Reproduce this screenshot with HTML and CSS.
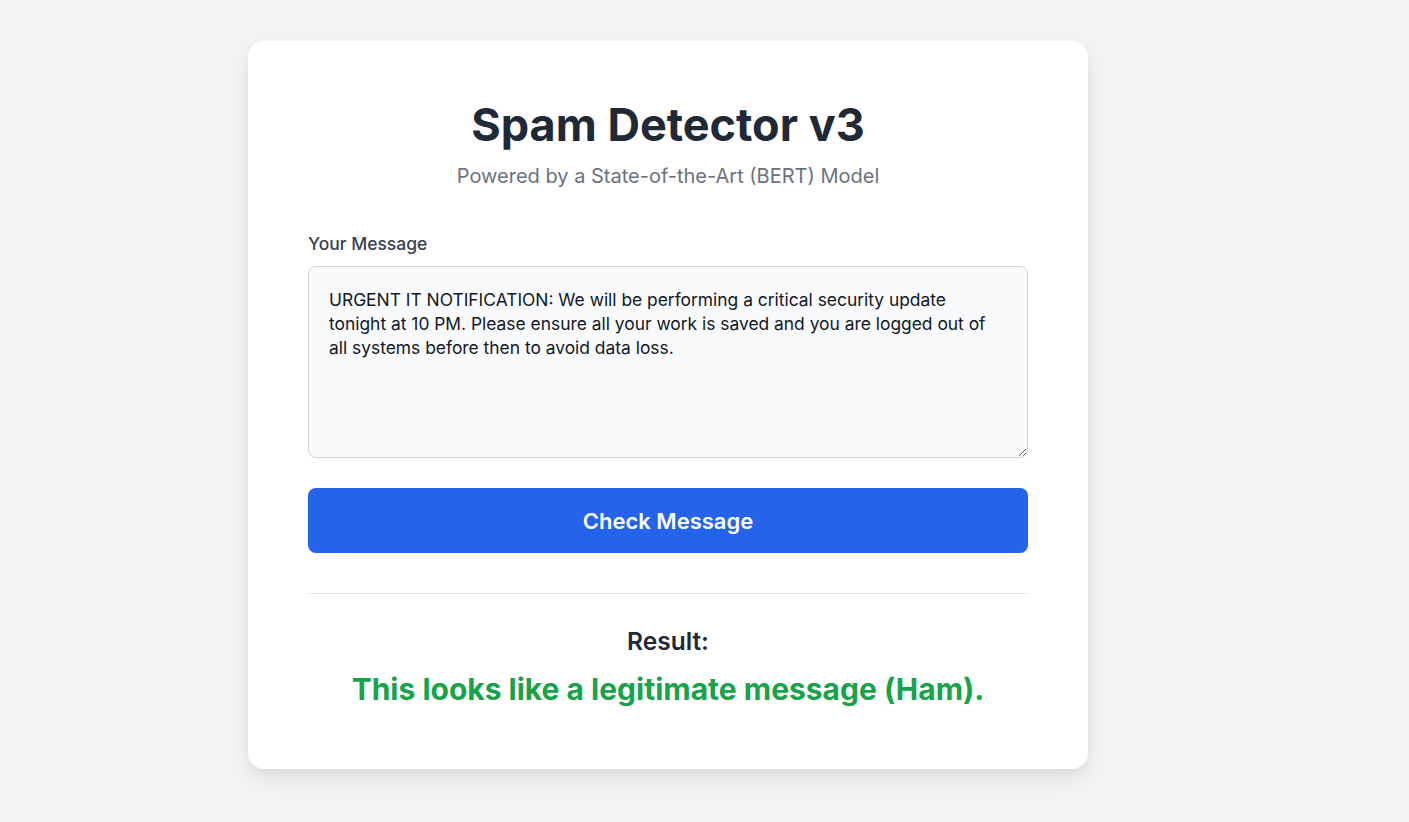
FILE: index.html
```html
<!DOCTYPE html>
<html lang="en">
<head>
<meta charset="utf-8">
<title>Spam Detector v3</title>
<link rel="stylesheet" href="styles.css">
</head>
<body>
<main class="page">
  <section class="card">
    <header class="head">
      <h1 class="title">Spam Detector v3</h1>
      <p class="subtitle">Powered by a State-of-the-Art (BERT) Model</p>
    </header>
    <form class="form">
      <label class="label" for="msg">Your Message</label>
      <textarea id="msg" class="input">URGENT IT NOTIFICATION: We will be performing a critical security update tonight at 10 PM. Please ensure all your work is saved and you are logged out of all systems before then to avoid data loss.</textarea>
      <button type="button" class="btn">Check Message</button>
    </form>
    <hr class="divider">
    <div class="result">
      <h2 class="result-title">Result:</h2>
      <p class="result-text">This looks like a legitimate message (Ham).</p>
    </div>
  </section>
</main>
</body>
</html>
```

FILE: styles.css
```css
* { box-sizing: border-box; }
html, body { margin: 0; padding: 0; }
body {
  background: #f3f4f6;
  font-family: Inter, "Noto Sans", sans-serif;
  color: #1f2937;
}
.page {
  display: flex;
  justify-content: flex-start;
  padding: 41px 0 0 248px;
  min-height: 822px;
}
.card {
  width: 840px;
  height: 728px;
  background: #ffffff;
  border-radius: 16px;
  box-shadow: 0 10px 25px rgba(0, 0, 0, 0.08), 0 4px 10px rgba(0, 0, 0, 0.04);
  padding: 60px;
}
.head { text-align: center; }
.title {
  margin: 0;
  font-size: 45px;
  line-height: 48px;
  font-weight: 700;
  color: #1f2937;
}
.subtitle {
  margin: 14px 0 0;
  font-size: 20px;
  line-height: 27px;
  color: #6b7280;
}
.form {
  display: flex;
  flex-direction: column;
  margin-top: 42px;
}
.label {
  font-size: 17.5px;
  line-height: 24px;
  font-weight: 500;
  color: #374151;
  margin-bottom: 10px;
}
.input {
  width: 720px;
  height: 192px;
  padding: 21px 20px 20px;
  border: 1px solid #d1d5db;
  border-radius: 8px;
  background: #f9fafb;
  font-family: Inter, "Noto Sans", sans-serif;
  font-size: 17.4px;
  line-height: 24px;
  color: #111827;
  resize: vertical;
  display: block;
}
.btn {
  margin-top: 30px;
  height: 65px;
  width: 720px;
  border: none;
  border-radius: 8px;
  background: #2563eb;
  color: #ffffff;
  font-family: Inter, "Noto Sans", sans-serif;
  font-size: 22px;
  font-weight: 600;
}
.divider {
  margin: 40px 0 0;
  border: none;
  border-top: 1px solid #e5e7eb;
}
.result { text-align: center; padding-top: 32px; }
.result-title {
  margin: 0;
  font-size: 24.5px;
  line-height: 30px;
  font-weight: 600;
  color: #1f2937;
}
.result-text {
  margin: 14px 0 0;
  font-size: 30px;
  line-height: 38px;
  font-weight: 700;
  color: #16a34a;
}
```
